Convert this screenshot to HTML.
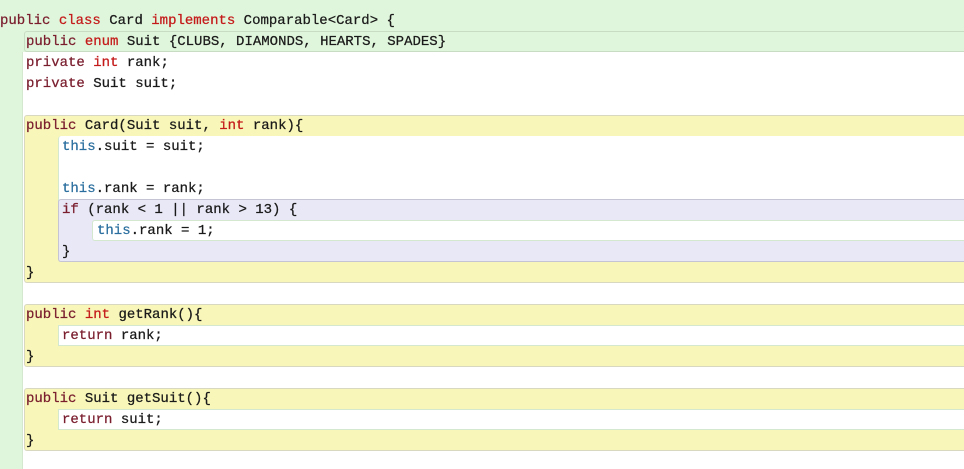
<!DOCTYPE html>
<html><head><style>
body{margin:0;width:964px;height:469px;overflow:hidden;background:#fff;position:relative;font-family:"Liberation Mono",monospace;font-size:14px;}
.b{position:absolute;box-sizing:border-box;}
.g{background:#e0f6dc;}
.y{background:#f8f6b8;border-top:1px solid #d8d8c0;border-bottom:1px solid #d8d8c0;}
.w{background:#fff;}
.l{background:#e8e8f6;border:1px solid #c4c4d4;border-right:none;border-radius:3px 0 0 3px;}
.t{position:absolute;white-space:pre;color:#1a1a1a;line-height:21px;height:21px;top:1px;-webkit-text-stroke:0.25px currentColor;}
.k{color:#7a1e2e}.r{color:#c41a1a}.s{color:#2a6e9e}
</style></head><body>
<div class="b g" style="left:0;top:0;width:964px;height:52px;"></div>
<div class="b g" style="left:0;top:0;width:22px;height:469px;"></div>
<div class="b" style="left:24px;top:31px;width:940px;height:21px;border:1px solid #c8dcc4;border-right:none;border-radius:3px 0 0 3px;background:#e0f6dc"></div>
<div class="b w" style="left:22px;top:52px;width:942px;height:417px;border-left:1px solid #d4e8d0"></div>

<div class="b y" style="left:24px;top:115px;width:940px;height:168px;border-left:1px solid #d8d8c0;border-radius:3px 0 0 3px"></div>
<div class="b w" style="left:58px;top:136px;width:906px;height:126px;border-left:1px solid #d4e8d0;border-radius:3px 0 0 3px"></div>
<div class="b l" style="left:58px;top:199px;width:906px;height:63px;"></div>
<div class="b w" style="left:92px;top:220px;width:872px;height:21px;border:1px solid #d4e8d0;border-right:none;border-radius:3px 0 0 3px"></div>

<div class="b y" style="left:24px;top:304px;width:940px;height:63px;border-left:1px solid #d8d8c0;border-radius:3px 0 0 3px"></div>
<div class="b w" style="left:58px;top:325px;width:906px;height:21px;border:1px solid #d4e8d0;border-right:none"></div>
<div class="b y" style="left:24px;top:388px;width:940px;height:63px;border-left:1px solid #d8d8c0;border-radius:3px 0 0 3px"></div>
<div class="b w" style="left:58px;top:409px;width:906px;height:21px;border:1px solid #d4e8d0;border-right:none"></div>

<div class="t" style="left:0;margin-top:10px"><span class="k">public</span> <span class="r">class</span> Card <span class="r">implements</span> Comparable&lt;Card&gt; {</div>
<div class="t" style="left:26px;margin-top:31px"><span class="k">public</span> <span class="r">enum</span> Suit {CLUBS, DIAMONDS, HEARTS, SPADES}</div>
<div class="t" style="left:26px;margin-top:52px"><span class="k">private</span> <span class="r">int</span> rank;</div>
<div class="t" style="left:26px;margin-top:73px"><span class="k">private</span> Suit suit;</div>
<div class="t" style="left:26px;margin-top:115px"><span class="k">public</span> Card(Suit suit, <span class="r">int</span> rank){</div>
<div class="t" style="left:62px;margin-top:136px"><span class="s">this</span>.suit = suit;</div>
<div class="t" style="left:62px;margin-top:178px"><span class="s">this</span>.rank = rank;</div>
<div class="t" style="left:62px;margin-top:199px"><span class="k">if</span> (rank &lt; 1 || rank &gt; 13) {</div>
<div class="t" style="left:97px;margin-top:220px"><span class="s">this</span>.rank = 1;</div>
<div class="t" style="left:62px;margin-top:241px">}</div>
<div class="t" style="left:26px;margin-top:262px">}</div>
<div class="t" style="left:26px;margin-top:304px"><span class="k">public</span> <span class="r">int</span> getRank(){</div>
<div class="t" style="left:62px;margin-top:325px"><span class="k">return</span> rank;</div>
<div class="t" style="left:26px;margin-top:346px">}</div>
<div class="t" style="left:26px;margin-top:388px"><span class="k">public</span> Suit getSuit(){</div>
<div class="t" style="left:62px;margin-top:409px"><span class="k">return</span> suit;</div>
<div class="t" style="left:26px;margin-top:430px">}</div>
</body></html>
